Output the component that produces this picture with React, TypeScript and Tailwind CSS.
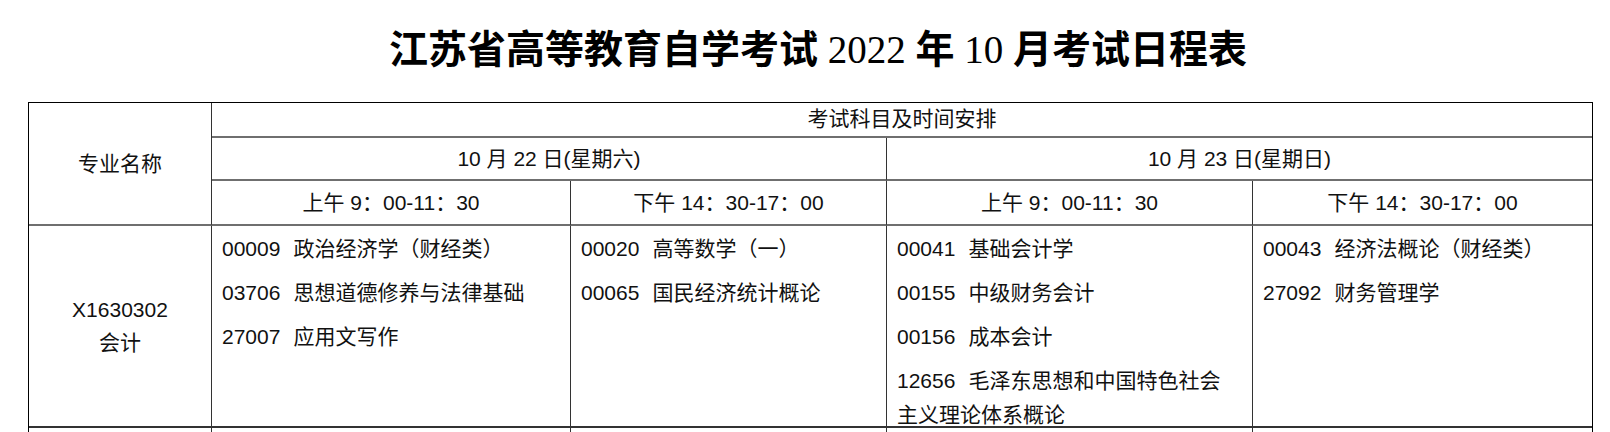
import React from 'react';

type Course = { code: string; name: React.ReactNode };

const sessions: Course[][] = [
  [
    { code: '00009', name: '政治经济学（财经类）' },
    { code: '03706', name: '思想道德修养与法律基础' },
    { code: '27007', name: '应用文写作' },
  ],
  [
    { code: '00020', name: '高等数学（一）' },
    { code: '00065', name: '国民经济统计概论' },
  ],
  [
    { code: '00041', name: '基础会计学' },
    { code: '00155', name: '中级财务会计' },
    { code: '00156', name: '成本会计' },
    {
      code: '12656',
      name: (
        <>
          毛泽东思想和中国特色社会
          <br />
          主义理论体系概论
        </>
      ),
    },
  ],
  [
    { code: '00043', name: '经济法概论（财经类）' },
    { code: '27092', name: '财务管理学' },
  ],
];

const hLine = 'border-b-2 border-b-[#6f6f6f]';
const vLine = 'border-r border-r-[#333]';

export default function App() {
  return (
    <div className="min-h-screen bg-white pt-[30px] text-[#111] font-['Liberation_Sans','Noto_Sans_CJK_SC',sans-serif]">
      {/* Title */}
      <h1 className="h-[40px] pl-[26px] text-center text-[39px] leading-[40px] font-bold text-black font-['Liberation_Serif','Noto_Sans_CJK_SC',serif]">
        江苏省高等教育自学考试 <span className="font-normal">2022</span> 年 <span className="font-normal">10</span> 月考试日程表
      </h1>

      {/* Schedule table */}
      <div className="mt-[32px] ml-[28px] w-[1565px] border border-black grid grid-cols-[183px_359px_316px_366px_339px] grid-rows-[35px_43px_45px_202px_40px] text-[21px]">
        <div className={`row-span-3 flex items-center justify-center ${vLine} ${hLine}`}>专业名称</div>
        <div className={`col-span-4 flex items-center justify-center pb-[2px] ${hLine}`}>考试科目及时间安排</div>

        <div className={`col-span-2 flex items-center justify-center ${vLine} ${hLine}`}>10 月 22 日(星期六)</div>
        <div className={`col-span-2 flex items-center justify-center ${hLine}`}>10 月 23 日(星期日)</div>

        <div className={`flex items-center justify-center ${vLine} ${hLine}`}>上午 9：00-11：30</div>
        <div className={`flex items-center justify-center ${vLine} ${hLine}`}>下午 14：30-17：00</div>
        <div className={`flex items-center justify-center ${vLine} ${hLine}`}>上午 9：00-11：30</div>
        <div className={`flex items-center justify-center ${hLine}`}>下午 14：30-17：00</div>

        {/* Major row */}
        <div className={`flex flex-col items-center justify-center leading-[33px] ${vLine} border-b-2 border-b-[#333]`}>
          <span>X1630302</span>
          <span>会计</span>
        </div>
        {sessions.map((list, i) => (
          <div
            key={i}
            className={`flex flex-col gap-[10px] pl-[10px] pt-[6px] leading-[34px] border-b-2 border-b-[#333] ${
              i < sessions.length - 1 ? vLine : ''
            }`}
          >
            {list.map((c) => (
              <div key={c.code} className="whitespace-nowrap">
                <span className="mr-[13px]">{c.code}</span>
                {c.name}
              </div>
            ))}
          </div>
        ))}

        {/* next row, cut off by the viewport */}
        <div className={vLine}></div>
        <div className={vLine}></div>
        <div className={vLine}></div>
        <div className={vLine}></div>
        <div></div>
      </div>
    </div>
  );
}
